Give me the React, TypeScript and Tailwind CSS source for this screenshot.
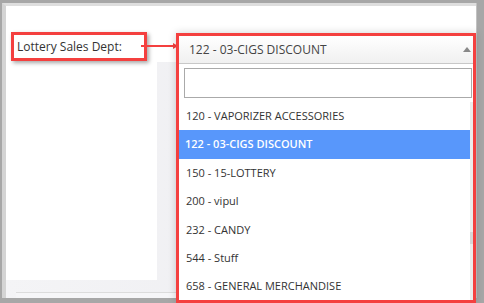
import React from 'react';

const options = [
  '120 - VAPORIZER ACCESSORIES',
  '122 - 03-CIGS DISCOUNT',
  '150 - 15-LOTTERY',
  '200 - vipul',
  '232 - CANDY',
  '544 - Stuff',
  '658 - GENERAL MERCHANDISE',
];

const SELECTED = '122 - 03-CIGS DISCOUNT';

export default function App() {
  return (
    <div className="relative w-[484px] h-[303px] overflow-hidden bg-[#a7a7a7] pt-[3px] pl-[2px] pr-[7px] pb-[5px] flex font-['Open_Sans',sans-serif] text-[11px] text-[#333]">
      {/* Window */}
      <div className="flex-1 flex flex-col bg-white border-t-[3px] border-l-[4px] border-t-[#dedede] border-l-[#d4d4d4]">
        <div className="h-[56px] bg-white" />
        <div className="flex-1 flex flex-col bg-gradient-to-r from-[#f4f4f6] to-[#ebebef]">
          <div className="flex-1 flex">
            <div className="w-[151px] h-[218px] bg-white" />
          </div>
          <div className="h-[6px] ml-[10px] bg-[#f6f6f8] border-t border-[#dcdcdc]" />
        </div>
      </div>
      <div className="w-0 border-l border-[#c2c2c2]" />

      {/* Label annotation */}
      <div className="absolute left-[11px] top-[32px] w-[136px] h-[29px] border-[3px] border-[#f4403f] shadow-[2px_2px_4px_rgba(0,0,0,0.35)] flex items-center pl-[3px] bg-white text-[12px]">
        <span>Lottery Sales Dept:</span>
      </div>

      {/* Connector */}
      <svg className="absolute left-[141px] top-[42px]" width="38" height="8" viewBox="0 0 38 8">
        <rect x="0" y="3" width="34" height="2" fill="#f4403f" />
        <polygon points="32,1 37,4 32,7" fill="#f4403f" />
      </svg>

      {/* Open dropdown */}
      <div className="absolute left-[176px] top-[33px] w-[300px] h-[270px] border-[3px] border-[#f4403f] shadow-[0_0_8px_rgba(0,0,0,0.18)] bg-white flex flex-col">
        <div className="h-[28px] shrink-0 flex items-center justify-between pl-[10px] pr-[2px] bg-gradient-to-b from-white to-[#f0f0f0] border-b border-[#c8c8c8] text-[#444] text-[12px]">
          <span>{SELECTED}</span>
          <svg width="8" height="5" viewBox="0 0 8 5">
            <polygon points="0,5 4,0 8,5" fill="#888" />
          </svg>
        </div>
        <div className="pt-[4px] pl-[5px] pr-[1px] shrink-0">
          <div className="h-[30px] border border-[#aaa] bg-white" />
        </div>
        <div className="flex-1 flex mt-[4px] min-h-0">
          <ul className="flex-1 overflow-hidden">
            {options.map((o) => (
              <li
                key={o}
                className={
                  o === SELECTED
                    ? 'h-[28.4px] flex items-center pl-[6px] bg-[#5897fb] text-white font-semibold'
                    : 'h-[28.4px] flex items-center pl-[7px] text-[#333]'
                }
              >
                {o}
              </li>
            ))}
          </ul>
          <div className="w-[3px] bg-[#ececec] flex flex-col">
            <div className="h-[130px]" />
            <div className="h-[12px] bg-[#d6d6d6]" />
          </div>
        </div>
      </div>
    </div>
  );
}
